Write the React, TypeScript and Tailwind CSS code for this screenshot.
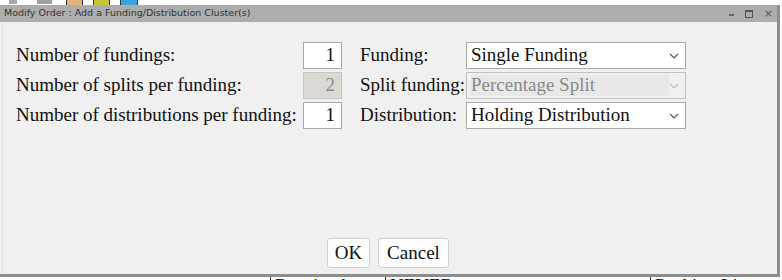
import React from "react";

const serif = { fontFamily: '"Liberation Serif", "DejaVu Serif", serif' };

function NumBox({ value, disabled }: { value: string; disabled?: boolean }) {
  return (
    <div
      className={`w-[39px] h-[27px] border flex items-center justify-end pr-[6px] ${
        disabled
          ? "bg-[#dcd9d5] border-[#c8c6c2] text-[#8a8a8a]"
          : "bg-white border-[#a9a9a9] text-[#111]"
      }`}
    >
      {value}
    </div>
  );
}

function Chevron({ color }: { color: string }) {
  return (
    <svg width="10" height="6" viewBox="0 0 10 6" className="shrink-0">
      <path d="M1 1 L5 5 L9 1" fill="none" stroke={color} strokeWidth="1.1" />
    </svg>
  );
}

function Select({ value, disabled }: { value: string; disabled?: boolean }) {
  return (
    <div
      className={`w-[220px] h-[27px] border flex items-center pl-[4px] pr-[6px] ${
        disabled ? "bg-[#f0f0f0] border-[#c0c0c0]" : "bg-white border-[#a9a9a9]"
      }`}
    >
      <div
        className={`flex-1 h-[21px] flex items-center whitespace-nowrap ${
          disabled ? "bg-[#e8e8e8] text-[#8a8a8a]" : "text-[#111]"
        }`}
      >
        {value}
      </div>
      <Chevron color={disabled ? "#c0c0c0" : "#555"} />
    </div>
  );
}

export default function App() {
  return (
    <div className="relative w-[782px] h-[280px] bg-white overflow-hidden">
      {/* background toolbar fragments */}
      <div className="absolute left-[9px] top-0 w-[8px] h-[4px] bg-[#a8a8a8]" />
      <div className="absolute left-[37px] top-0 w-[15px] h-[4px] bg-[#a0a0a0]" />
      <div className="absolute left-[66px] top-0 w-[17px] h-[5px] bg-[#e3b27a] border-x border-[#333]" />
      <div className="absolute left-[93px] top-0 w-[17px] h-[5px] bg-[#c7c23e] border-x border-[#333]" />
      <div className="absolute left-[120px] top-0 w-[18px] h-[5px] bg-[#3ba4e0] border-x border-[#333]" />
      {/* background bottom fragments */}
      <div
        className="absolute left-[270px] top-[277px] w-[114px] h-[10px] border-l border-[#333] text-[19px] leading-[18px] pl-[4px] text-[#111]"
        style={serif}
      >
        Received:
      </div>
      <div
        className="absolute left-[385px] top-[277px] w-[262px] h-[10px] border-l border-[#333] text-[19px] leading-[18px] pl-[4px] text-[#111]"
        style={serif}
      >
        NEVER
      </div>
      <div
        className="absolute left-[650px] top-[277px] w-[130px] h-[10px] border-l border-[#333] text-[19px] leading-[18px] pl-[4px] text-[#111]"
        style={serif}
      >
        Packing List:
      </div>

      {/* dialog window */}
      <div className="absolute left-0 top-[5px] w-[780px] h-[272px] flex flex-col bg-[#f0f0f0] border-r-[3px] border-b-[3px] border-[#8d8d8d]">
        <div
          className="h-[17px] bg-[#adadad] flex items-center pl-[4px] pr-[4px] text-[#333] text-[9.5px]"
          style={{ fontFamily: '"DejaVu Sans", sans-serif' }}
        >
          <span className="flex-1">Modify Order : Add a Funding/Distribution Cluster(s)</span>
          <div className="flex items-center gap-[11px] text-[#555]">
            <div className="w-[5px] h-[2px] bg-[#666] mt-[3px]" />
            <div className="w-[8px] h-[8px] border border-[#555] border-t-2" />
            <span className="text-[11px] leading-none">×</span>
          </div>
        </div>
        <div className="flex-1 flex flex-col border-l border-[#e0e0e0] ml-[2px]">
          <div
            className="flex pt-[20px] pl-[13px] text-[19px] text-[#111]"
            style={serif}
          >
            <div className="flex flex-col gap-[3px]">
              {[
                ["Number of fundings:", "1", false],
                ["Number of splits per funding:", "2", true],
                ["Number of distributions per funding:", "1", false],
              ].map(([label, val, dis]) => (
                <div key={label as string} className="flex items-center h-[27px]">
                  <span className="w-[287px] whitespace-nowrap">{label as string}</span>
                  <NumBox value={val as string} disabled={dis as boolean} />
                </div>
              ))}
            </div>
            <div className="flex flex-col gap-[3px] ml-[18px]">
              {[
                ["Funding:", "Single Funding", false],
                ["Split funding:", "Percentage Split", true],
                ["Distribution:", "Holding Distribution", false],
              ].map(([label, val, dis]) => (
                <div key={label as string} className="flex items-center h-[27px]">
                  <span className="w-[106px] whitespace-nowrap">{label as string}</span>
                  <Select value={val as string} disabled={dis as boolean} />
                </div>
              ))}
            </div>
          </div>
          <div className="flex-1" />
          <div
            className="flex justify-center gap-[8px] pb-[6px] pr-[4px] text-[19px] text-[#111]"
            style={serif}
          >
            <button className="w-[43px] h-[30px] bg-[#fdfdfd] border border-[#d0d0d0] rounded-[3px]">
              OK
            </button>
            <button className="w-[71px] h-[30px] bg-[#fdfdfd] border border-[#d0d0d0] rounded-[3px]">
              Cancel
            </button>
          </div>
        </div>
      </div>
    </div>
  );
}
